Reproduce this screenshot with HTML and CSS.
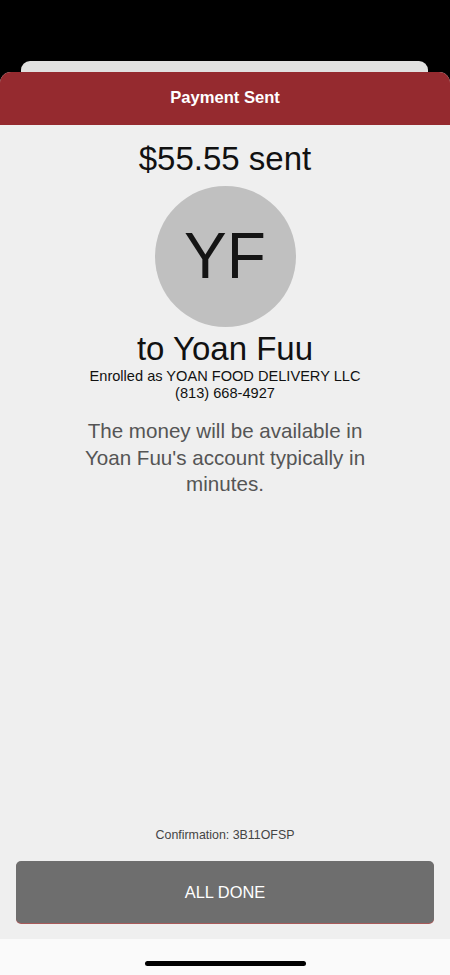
FILE: index.html
```html
<!DOCTYPE html>
<html lang="en">
<head>
<meta charset="utf-8">
<meta name="viewport" content="width=device-width, initial-scale=1">
<title>Payment Sent</title>
<link rel="stylesheet" href="styles.css">
</head>
<body>
<div class="screen">
  <div class="status-area"></div>
  <div class="back-card"></div>
  <div class="sheet">
    <header class="sheet-header">Payment Sent</header>
    <main class="sheet-body">
      <div class="amount">$55.55 sent</div>
      <div class="avatar">YF</div>
      <div class="recipient">to Yoan Fuu</div>
      <div class="enrolled">Enrolled as YOAN FOOD DELIVERY LLC</div>
      <div class="phone">(813) 668-4927</div>
      <p class="note">The money will be available in Yoan Fuu's account typically in minutes.</p>
      <div class="spacer"></div>
      <div class="confirmation">Confirmation: 3B11OFSP</div>
      <button class="done-btn" type="button">ALL DONE</button>
    </main>
    <footer class="home-area"><span class="home-bar"></span></footer>
  </div>
</div>
</body>
</html>
```
FILE: styles.css
```css
* { box-sizing: border-box; }
html, body {
  margin: 0;
  padding: 0;
  background: #000;
  font-family: "Liberation Sans", Arial, sans-serif;
}
.screen {
  width: 450px;
  height: 975px;
  display: flex;
  flex-direction: column;
  overflow: hidden;
}
.status-area {
  height: 61px;
  flex: none;
}
.back-card {
  height: 11px;
  flex: none;
  margin: 0 22px 0 21px;
  background: #e1e1e0;
  border-radius: 9px 9px 0 0;
}
.sheet {
  flex: 1;
  display: flex;
  flex-direction: column;
  border-radius: 11px 11px 0 0;
  overflow: hidden;
  background: #efefef;
}
.sheet-header {
  height: 53px;
  flex: none;
  background: #952a2f;
  color: #fff;
  font-weight: bold;
  font-size: 16.6px;
  display: flex;
  align-items: center;
  justify-content: center;
  padding-bottom: 1px;
}
.sheet-body {
  flex: 1;
  display: flex;
  flex-direction: column;
  align-items: center;
  padding: 15px 16px 16px;
  color: #111;
}
.amount {
  font-size: 33px;
  line-height: 38px;
}
.avatar {
  width: 141px;
  height: 141px;
  border-radius: 50%;
  background: #c0c0c0;
  margin-top: 8px;
  display: flex;
  align-items: center;
  justify-content: center;
  font-size: 64px;
  color: #151515;
  padding-bottom: 2px;
}
.recipient {
  font-size: 33px;
  line-height: 38px;
  margin-top: 3px;
}
.enrolled, .phone {
  font-size: 14.6px;
  line-height: 17px;
}
.note {
  margin: 16px 0 0;
  max-width: 300px;
  text-align: center;
  font-size: 20.6px;
  line-height: 26.5px;
  color: #555;
}
.spacer { flex: 1; }
.confirmation {
  font-size: 12.4px;
  line-height: 15px;
  color: #444;
  margin-bottom: 18px;
}
.done-btn {
  width: 100%;
  height: 62px;
  flex: none;
  border: none;
  border-radius: 5px;
  background: #6e6e6e;
  box-shadow: 0 1px 0 #a85a5a;
  color: #fff;
  font-family: inherit;
  font-size: 16.4px;
  padding: 0;
}
.home-area {
  height: 36px;
  flex: none;
  background: #fafafa;
  display: flex;
  justify-content: center;
  padding-top: 22px;
}
.home-bar {
  display: block;
  width: 161px;
  height: 5px;
  border-radius: 3px;
  background: #000;
}
```
